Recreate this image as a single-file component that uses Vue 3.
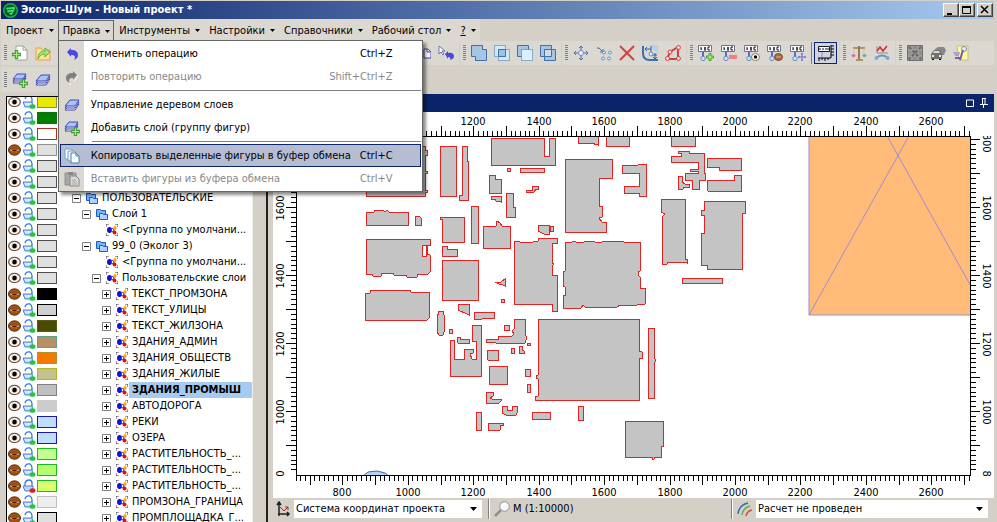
<script setup>
import { ref } from 'vue'

const menus = ['Проект', 'Правка', 'Инструменты', 'Настройки', 'Справочники', 'Рабочий стол', '?']
const openMenu = ref('Правка')

const editItems = [
  { icon: 'undo', text: 'Отменить операцию', keys: 'Ctrl+Z' },
  { icon: 'redo', text: 'Повторить операцию', keys: 'Shift+Ctrl+Z', off: true },
  { sep: true },
  { icon: 'layers', text: 'Управление деревом слоев' },
  { icon: 'layers-add', text: 'Добавить слой (группу фигур)' },
  { sep: true },
  { icon: 'copy', text: 'Копировать выделенные фигуры в буфер обмена', keys: 'Ctrl+C', hot: true },
  { icon: 'paste', text: 'Вставить фигуры из буфера обмена', keys: 'Ctrl+V', off: true }
]

const groups = [
  ['union', 'intersect', 'subtract', 'xor'],
  ['move', 'nodes', 'delete', 'align', 'polygon'],
  ['tag-add', 'tag-remove', 'tag-eye', 'tag-hide', 'tag-move', '|', 'tag-ruler'],
  ['balance', 'chart'],
  ['grid', 'car', 'note']
]

const P = '#e0e0e0'
const rows = [
  { c: '#e8e800', b: '#8a8a50' },
  { c: '#008000', b: '#107010' },
  { c: '#ffffff', b: '#b03020' },
  { c: P, b: '#909090', shut: true },
  { c: P, b: '#505050' },
  { c: P, b: '#505050' },
  { c: P, b: '#505050', lvl: 0, exp: '-', icon: 'folder', name: 'ПОЛЬЗОВАТЕЛЬСКИЕ' },
  { c: P, b: '#505050', lvl: 1, exp: '-', icon: 'folder', name: 'Слой 1' },
  { c: P, b: '#505050', lvl: 2, icon: 'figures', name: '<Группа по умолчани...' },
  { c: P, b: '#505050', lvl: 1, exp: '-', icon: 'folder', name: '99_0 (Эколог 3)' },
  { c: P, b: '#505050', lvl: 2, icon: 'figures', name: '<Группа по умолчани...' },
  { c: P, b: '#505050', lvl: 2, exp: '-', icon: 'figures', name: 'Пользовательские слои' },
  { c: '#000000', b: '#000000', lvl: 3, shut: true, name: 'ТЕКСТ_ПРОМЗОНА' },
  { c: '#d0d0d0', b: '#000000', lvl: 3, shut: true, name: 'ТЕКСТ_УЛИЦЫ' },
  { c: '#4a4a00', b: '#5a5a10', lvl: 3, shut: true, name: 'ТЕКСТ_ЖИЛЗОНА' },
  { c: '#b89068', b: '#60a088', lvl: 3, name: 'ЗДАНИЯ_АДМИН' },
  { c: '#f47a00', b: '#b09030', lvl: 3, name: 'ЗДАНИЯ_ОБЩЕСТВ' },
  { c: '#c2c28a', b: '#b4b430', lvl: 3, name: 'ЗДАНИЯ_ЖИЛЫЕ' },
  { c: '#c0c0c0', b: '#808080', lvl: 3, name: 'ЗДАНИЯ_ПРОМЫШ', selected: true },
  { c: '#cccccc', b: '#cccccc', lvl: 3, name: 'АВТОДОРОГА' },
  { c: '#c0dcff', b: '#1818b8', lvl: 3, name: 'РЕКИ' },
  { c: '#c0dcff', b: '#1818b8', lvl: 3, name: 'ОЗЕРА' },
  { c: '#c0ff90', b: '#20b820', lvl: 3, shut: true, name: 'РАСТИТЕЛЬНОСТЬ_...' },
  { c: '#b0ff70', b: '#20b820', lvl: 3, shut: true, name: 'РАСТИТЕЛЬНОСТЬ_...' },
  { c: '#d8ff70', b: '#20b820', lvl: 3, shut: true, locked: true, name: 'РАСТИТЕЛЬНОСТЬ_...' },
  { c: '#eeeeee', b: '#c0c0c0', lvl: 3, shut: true, name: 'ПРОМЗОНА_ГРАНИЦА' },
  { c: P, b: '#000000', lvl: 3, shut: true, name: 'ПРОМПЛОЩАДКА_Г...' }
]

const shapes = [
  '366,146 425,146 425,150 427,150 427,155 425,155 425,171 427,171 427,173 425,173 425,190 427,190 427,192 425,192 425,196 366,196',
  '440,146 456,146 456,196 440,196',
  '462,146 467,146 467,161 468,161 468,200 459,200 459,195 462,195',
  '491,138 544,138 544,156 549,156 549,138 555,138 555,165 491,165',
  '507,168 510,168 510,171 507,171',
  '520,168 544,168 544,172 520,172',
  '489,175 495,175 495,179 501,179 501,193 489,193',
  '491,196 501,196 501,202 496,201 495,199 491,199',
  '506,193 513,193 513,207 515,207 515,217 506,217',
  '526,190 532,190 532,186 538,186 538,189 536,189 534,192 526,192',
  '565,159 612,159 612,178 599,178 599,206 602,206 602,217 599,218 602,222 606,222 606,232 565,232',
  '471,206 478,206 478,243 471,243',
  '440,217 464,217 464,242 442,242 442,219 440,219',
  '483,226 496,226 497,221 500,223 502,226 510,226 510,248 483,248',
  '538,225 549,225 549,234 544,234 538,231',
  '550,226 553,226 553,231 550,231',
  '442,246 447,246 447,249 457,249 457,256 442,256',
  '442,260 478,260 478,300 442,300',
  '514,242 517,241 520,242 533,242 538,241 539,238 557,238 557,243 552,243 552,263 554,264 552,266 552,275 557,275 557,311 552,311 552,304 514,304',
  '565,242 572,242 574,241 576,242 584,242 586,241 593,241 595,242 602,242 603,241 611,241 612,242 613,241 623,241 624,242 640,242 640,271 638,272 638,275 640,277 640,288 645,288 645,304 637,305 620,305 617,307 585,307 583,305 581,308 563,308 563,295 565,295 565,287 563,286 563,272 565,271',
  '578,134 598,134 598,145 591,143 578,143',
  '606,134 629,134 629,146 606,146',
  '671,134 695,134 695,146 671,146',
  '622,165 638,165 639,164 646,164 646,196 639,196 639,193 624,193 624,186 639,186 639,173 622,173',
  '678,151 689,151 689,153 704,153 704,173 705,173 705,180 699,180 699,189 692,189 692,180 685,180 685,173 698,173 698,171 690,171 690,169 698,169 698,162 671,162 671,156 681,156 681,153 678,153',
  '678,176 682,176 682,182 685,184 689,184 689,187 684,187 683,189 678,189',
  '707,158 741,158 741,170 719,170 719,167 707,167',
  '707,180 734,180 734,175 741,175 741,191 708,191 707,189',
  '661,199 685,199 685,259 687,259 687,263 682,262 668,262 667,264 662,264 662,217 665,214 661,212',
  '704,201 745,201 745,213 742,213 742,269 707,269 707,265 701,265 701,233 704,233 704,215 701,215 701,210 704,210',
  '682,278 722,278 722,283 682,283',
  '366,212 374,212 375,210 383,210 385,212 387,210 389,212 408,212 408,225 366,225',
  '415,216 419,216 421,218 421,225 415,225',
  '366,239 430,239 430,245 422,245 422,256 426,256 426,246 427,246 427,254 430,255 430,272 428,274 418,274 417,277 407,277 406,275 394,275 393,273 382,273 381,276 373,276 372,274 366,274',
  '365,293 370,293 371,290 410,290 411,292 430,292 429,318 427,320 365,320',
  '458,304 469,304 469,315 465,313 460,311 458,310',
  '474,312 494,312 494,318 483,318 481,320 474,319',
  '439,311 443,311 444,315 444,332 443,335 439,335 437,332 437,318',
  '449,329 452,329 452,333 449,333',
  '450,340 454,340 454,359 464,359 464,349 473,349 473,353 470,354 472,359 476,359 476,341 472,341 472,325 481,325 481,376 450,376',
  '457,337 460,337 460,339 469,339 469,343 458,343 457,342',
  '504,325 509,325 509,330 504,330',
  '486,339 498,339 498,336 512,336 514,334 512,331 514,329 514,319 525,319 525,335 526,336 526,340 525,343 496,343 495,342 486,342',
  '527,343 530,343 530,345 527,345',
  '511,348 514,348 514,353 511,353',
  '519,346 522,346 522,350 524,351 524,353 519,353',
  '487,353 488,350 498,350 498,360 488,360',
  '489,366 507,366 507,384 489,384',
  '525,369 530,369 530,376 525,376',
  '527,384 530,384 530,392 527,392',
  '486,392 493,392 493,396 490,398 492,399 501,399 501,401 499,403 486,403',
  '502,406 507,406 507,410 512,410 512,406 517,406 517,413 516,415 506,415 502,413',
  '476,412 481,412 481,430 476,430',
  '488,423 503,423 503,425 501,425 500,430 488,430',
  '532,412 550,412 550,419 532,419',
  '578,406 583,406 583,420 578,420',
  '538,319 639,319 639,351 642,352 642,358 639,358 639,400 535,400 535,397 538,396 538,379 536,378 536,376 538,375',
  '648,328 654,328 654,358 655,359 655,362 654,363 654,398 648,398',
  '625,421 663,421 663,446 661,446 661,457 655,457 654,459 652,459 652,457 625,457',
  '495,282 501,282 505,279 505,286 501,284 499,284',
  '501,299 504,299 504,302 501,302'
]

// Ruler ticks: seven steps to every hundred metres.
const hTicks = []
for (let i = -94; i <= 50; i++) {
  hTicks.push({ p: Math.round(439 + (i * 32.72) / 7), big: i % 7 === 0 })
}
const hLabels = [800, 1000, 1200, 1400, 1600, 1800, 2000, 2200, 2400, 2600].map((v) => ({
  v,
  p: Math.round(439 + (v - 2000) * 0.3272)
}))
const vTicks = []
for (let i = -54; i <= 14; i++) {
  vTicks.push({ p: Math.round(71 - (i * 34) / 7), big: i % 7 === 0 })
}
const vLabels = [1800, 1600, 1400, 1200, 1000, 800].map((v) => ({
  v,
  p: Math.round(72 - (v - 1600) * 0.34)
}))
</script>

<template>
  <svg class="defs" aria-hidden="true">
    <symbol id="undo" viewBox="0 0 16 16"><path d="M3 6l4-4v2c5 0 7 2 7 5 0 2-1 4-4 5 2-3 1-5-3-5v2z" fill="#4a4ae0" /></symbol>
    <symbol id="redo" viewBox="0 0 16 16"><path d="M13 6l-4-4v2C4 4 2 6 2 9c0 2 1 4 4 5-2-3-1-5 3-5v2z" fill="#808080" /><path d="M14 7l-4 5M7 15H5" stroke="#fff" /></symbol>
    <symbol id="layers" viewBox="0 0 16 16">
      <path d="M1 13l5-6h9l-4 6z" fill="#fff" stroke="#4548a8" /><path d="M1 11l5-6h9l-4 6z" fill="#dfe8ff" stroke="#4548a8" /><path d="M1 9l5-6h9l-4 6z" fill="#a8c4f4" stroke="#4548b8" />
    </symbol>
    <symbol id="plus" viewBox="0 0 8 8"><path d="M3 .5h2V3h2.500v2H5v2.500H3V5H.5V3H3z" fill="#a8f080" stroke="#48a030" /></symbol>
    <symbol id="layers-add" viewBox="0 0 16 16">
      <path d="M1 11l4-5h9l-3 5z" fill="#fff" stroke="#4548a8" /><path d="M1 9l4-5h9l-3 5z" fill="#dfe8ff" stroke="#4548a8" /><path d="M1 7l4-5h9l-3 5z" fill="#a8c4f4" stroke="#4548b8" />
      <use href="#plus" x="7" y="7" width="9" height="9" />
    </symbol>
    <symbol id="copy" viewBox="0 0 16 16">
      <path d="M1 1h6l2 2v8H1z" fill="#fff" stroke="#6aa0d0" /><path d="M4 3h6l2 2v8H4z" fill="#e8f4ff" stroke="#6aa0d0" /><path d="M7 5h5l3 3v7H7z" fill="#fff" stroke="#4080b0" /><path d="M12 5v3h3" fill="none" stroke="#4080b0" />
    </symbol>
    <symbol id="paste" viewBox="0 0 16 16">
      <path d="M1 2h11v12H1z" fill="#a8a8a8" stroke="#909090" /><path d="M4 1h5v3H4z" fill="#888" /><path d="M6 5h6l3 3v7H6z" fill="#d8d8d8" stroke="#888" /><path d="M8 9h4M8 11h5M8 13h5" stroke="#aaa" />
    </symbol>
    <symbol id="new" viewBox="0 0 16 16">
      <path d="M4 1h7l4 4v10H4z" fill="#fff" stroke="#a0a0a0" /><path d="M11 1v4h4" fill="none" stroke="#a0a0a0" /><use href="#plus" x="0" y="5" width="9" height="9" />
    </symbol>
    <symbol id="open" viewBox="0 0 16 16">
      <path d="M1 3h5l1 2h8v10H1z" fill="#ffe098" stroke="#e8a050" /><path d="M3 14c0-6 3-8 7-8V3l5 4-5 5V9c-3 0-5 1-7 5z" fill="#a0e870" stroke="#60b040" />
    </symbol>
    <symbol id="cut-page" viewBox="0 0 16 16"><path d="M9 4h4l3 3v6H9z" fill="#fff" stroke="#4040b0" /><path d="M12 4v3h3" fill="none" stroke="#4040b0" /></symbol>
    <symbol id="cursor-undo" viewBox="0 0 16 16">
      <path d="M1 1v8l2-2 2 3 1-1-2-3h3z" fill="#fff" stroke="#5858a0" stroke-width=".8" /><path d="M7 9l3-3v2c4-1 6 1 6 3s-1 3-4 4c1-2 0-3-2-3v2z" fill="#4a4ad8" />
    </symbol>
    <symbol id="union" viewBox="0 0 16 16"><path d="M.5.5h11v4h4v11h-11v-4h-4z" fill="#a8c4e4" stroke="#4070a8" /></symbol>
    <symbol id="intersect" viewBox="0 0 16 16">
      <path d="M.5.5h11v11H.5zM4.500 4.500h11v11h-11z" fill="#d0e8fc" stroke="#4070a8" stroke-dasharray="1 1" /><path d="M4.500 4.500h7v7h-7z" fill="#a0c0e4" stroke="#4070a8" />
    </symbol>
    <symbol id="subtract" viewBox="0 0 16 16"><path d="M.5.5h11v11H.5z" fill="#a8c4e4" stroke="#4070a8" /><path d="M4.500 4.500h11v11h-11z" fill="#d8f0ff" stroke="#4070a8" stroke-dasharray="1 1" /></symbol>
    <symbol id="xor" viewBox="0 0 16 16"><path d="M.5.5h11v11H.5zM4.500 4.500h11v11h-11z" fill="#a8c4e4" stroke="#4070a8" /><path d="M4.500 4.500h7v7h-7z" fill="#d4dce4" stroke="#4070a8" /></symbol>
    <symbol id="move" viewBox="0 0 16 16">
      <path d="M8 1v14M1 8h14M6 3l2-2 2 2M6 13l2 2 2-2M3 6L1 8l2 2M13 6l2 2-2 2" fill="none" stroke="#4870a0" /><circle cx="8" cy="8" r="2.500" fill="#e8f4ff" stroke="#7090b8" />
    </symbol>
    <symbol id="nodes" viewBox="0 0 16 16">
      <path d="M1 3h2l4 4M4 7h3V4" fill="none" stroke="#4070a0" /><g fill="#d8ecff" stroke="#6890c0"><circle cx="8" cy="7.500" r="1.500" /><circle cx="14" cy="7.500" r="1.500" /><circle cx="7" cy="13.500" r="1.500" /><circle cx="13" cy="13.500" r="1.500" /></g>
    </symbol>
    <symbol id="delete" viewBox="0 0 16 16"><path d="M1 1l14 14M15 1L1 15" stroke="#d84040" stroke-width="2" /></symbol>
    <symbol id="align" viewBox="0 0 16 16">
      <path d="M7 0h9v9z" fill="#b4d0f0" /><path d="M1 1v7q0 7 7 7h8" fill="none" stroke="#3870a8" stroke-width="2" /><path d="M3 4h6M5 2L3 4l2 2M9 1v6M10 10h5M13 8v5M11 12l2 2 2-2" fill="none" stroke="#3060a0" /><circle cx="9" cy="9" r="2" fill="#d8ecff" stroke="#6890c0" />
    </symbol>
    <symbol id="polygon" viewBox="0 0 16 16">
      <path d="M2 14l3-7 8-5v12z" fill="none" stroke="#c84040" stroke-width="2" /><g fill="#ffd0d0" stroke="#d04848"><circle cx="2.500" cy="13.500" r="2" /><circle cx="5" cy="7" r="2" /><circle cx="13.500" cy="2.500" r="2" /><circle cx="13.500" cy="13.500" r="2" /></g>
    </symbol>
    <symbol id="tag" viewBox="0 0 16 16">
      <path d="M.5.5h13v6H.5z" fill="#fff" stroke="#707098" /><path d="M3 2v3M3 4h1M6 3h2M6 5h2M7 2v3M10 2v3M10 2h2M10 5h2" stroke="#101020" /><path d="M5 7v5" stroke="#6868c0" stroke-width="2" /><circle cx="5" cy="13.500" r="2.200" fill="#c8e0f8" stroke="#6890c0" />
    </symbol>
    <symbol id="tag-add" viewBox="0 0 16 16"><use href="#tag" /><use href="#plus" x="8" y="8" width="8" height="8" /></symbol>
    <symbol id="tag-remove" viewBox="0 0 16 16"><use href="#tag" /><path d="M8 10h8v4H8z" fill="#f08080" /></symbol>
    <symbol id="tag-eye" viewBox="0 0 16 16"><use href="#tag" /><ellipse cx="11.500" cy="12" rx="4" ry="3.500" fill="#fff" stroke="#907860" /><circle cx="11.500" cy="12" r="1.700" /></symbol>
    <symbol id="tag-hide" viewBox="0 0 16 16"><use href="#tag" /><ellipse cx="11.500" cy="12" rx="4" ry="3.500" fill="#a86840" stroke="#805030" /><path d="M9 12h5" stroke="#e0b090" /></symbol>
    <symbol id="tag-move" viewBox="0 0 16 16"><use href="#tag" /><path d="M12 8v8M8 12h8M11 9h2M11 15h2M9 11v2M15 11v2" stroke="#6868e0" /></symbol>
    <symbol id="tag-ruler" viewBox="0 0 16 16">
      <path d="M.5 1.500h11v5H.5z" fill="#fff" stroke="#181830" /><path d="M2 3v2M5 3v2M8 3v2M10 3v2" stroke="#101020" /><path d="M13 0v13H0M13 1h3M13 4h3M13 7h3M13 10h3M1 13v3M4 13v2M7 13v3M10 13v2" stroke="#000" fill="none" />
      <path d="M4 7v5" stroke="#a0b8d8" stroke-width="2" />
    </symbol>
    <symbol id="balance" viewBox="0 0 16 16">
      <path d="M8 1v13" stroke="#a07848" stroke-width="2" /><path d="M5 15h7M2 3h12" stroke="#a07848" stroke-width="1.500" /><path d="M3 3v6M13 3v6" stroke="#c0b090" stroke-dasharray="1 1" /><ellipse cx="2.500" cy="10.500" rx="2" ry="1.500" fill="#d070b0" /><ellipse cx="13.500" cy="10.500" rx="2" ry="1.500" fill="#70b090" />
    </symbol>
    <symbol id="chart" viewBox="0 0 16 16">
      <path d="M3 1v7h11" fill="none" stroke="#909090" /><path d="M3 6l3-4 3 4 4-5" fill="none" stroke="#d02828" stroke-width="1.500" /><path d="M2 13q6-5 12 0" fill="none" stroke="#6890c0" stroke-width="2" /><circle cx="2.500" cy="13" r="2" fill="#80a8d8" /><circle cx="13.500" cy="13" r="2" fill="#80a8d8" />
    </symbol>
    <symbol id="grid" viewBox="0 0 16 16">
      <path d="M.5.5h15v15H.5z" fill="#909090" stroke="#707070" /><path d="M1 5h14M1 11h14M5 1v14M11 1v14" stroke="#a8a8a8" /><path d="M2 2l12 12M14 2L2 14" stroke="#686868" stroke-width="2" stroke-dasharray="3 2" />
    </symbol>
    <symbol id="car" viewBox="0 0 16 16">
      <path d="M5 4l3-2h6l2 3-2 5H5z" fill="#888" /><path d="M1 9l3-4h6l2 4v5H1z" fill="#707070" /><path d="M4 6h5l1 2H3z" fill="#d8d8d8" /><path d="M2 11h2M9 11h2" stroke="#e8e8e8" stroke-width="2" /><path d="M2 14h2v1H2zM9 14h2v1H9z" />
    </symbol>
    <symbol id="note" viewBox="0 0 16 16">
      <path d="M4 1h11v14H6z" fill="#fff8a0" stroke="#c8c070" /><circle cx="11" cy="4" r="2.500" fill="#e0f0ff" stroke="#8090b0" /><path d="M0 7h7l-1 4H2z" fill="#b0a0d0" /><path d="M10 5L7 15M2 13h5" stroke="#7060b0" stroke-width="2" />
    </symbol>
    <symbol id="eye" viewBox="0 0 13 12"><ellipse cx="6.500" cy="6" rx="5.800" ry="4.600" fill="#fff" stroke="#7a5238" stroke-width="1.300" /><circle cx="6.500" cy="6" r="3" fill="#c8c0b8" /><circle cx="6.500" cy="6" r="2.200" /></symbol>
    <symbol id="eye-shut" viewBox="0 0 13 12"><ellipse cx="6.500" cy="6" rx="6" ry="5.200" fill="#a05010" stroke="#603010" /><path d="M2 6q4 2.500 9 0" fill="none" stroke="#e8b080" /><path d="M4 6q2.500 3 5 0" fill="#402000" /></symbol>
    <symbol id="unlock" viewBox="0 0 14 14">
      <path d="M3 4q1-4 5-3 2 1 2 4v2" fill="none" stroke="#3878e0" stroke-width="1.300" /><path d="M1 7h9l1 5H3z" fill="#c0d8ff" stroke="#4080e0" /><path d="M3 9h6" stroke="#fff" /><ellipse cx="10.500" cy="11.500" rx="3" ry="2.300" fill="#20c840" />
    </symbol>
    <symbol id="lock" viewBox="0 0 14 14">
      <path d="M3 7V4q1-3 4-3t3 3v3" fill="none" stroke="#3878e0" stroke-width="1.300" /><path d="M1 7h10v5H3z" fill="#c0d8ff" stroke="#4080e0" /><ellipse cx="10.500" cy="11.500" rx="3" ry="2.300" fill="#e02020" />
    </symbol>
    <symbol id="folder" viewBox="0 0 12 12"><path d="M.5 1.500h4l1 1h4v6h-9z" fill="#78b0f8" stroke="#1858c8" /><path d="M3.500 5.500h3l1 1h4v5h-8z" fill="#b0d4ff" stroke="#1858c8" /></symbol>
    <symbol id="figures" viewBox="0 0 12 12">
      <path d="M0 3V0h3M9 0h3v3M12 9v3H9M3 12H0V9" fill="none" stroke="#404040" /><ellipse cx="3.500" cy="6" rx="2.500" ry="3" fill="#1010e0" /><circle cx="6.500" cy="6" r="1.500" fill="#fff" stroke="#1010e0" /><path d="M9 1l2 3H7z" fill="#f0c000" /><circle cx="9" cy="4.500" r="1.500" fill="#f0b000" /><circle cx="8.500" cy="8.500" r="2" fill="#e01010" />
    </symbol>
    <symbol id="axes" viewBox="0 0 16 16"><path d="M4 15V2M2 4l2-3 2 3M3 13h11M12 11l2 2-2 2" fill="none" stroke="#202020" stroke-width="1.500" /><path d="M5 6l4 4 4-4M10 6h3v3" fill="none" stroke="#a02828" /></symbol>
    <symbol id="lens" viewBox="0 0 16 16"><circle cx="10.500" cy="5.500" r="4.800" fill="#f4f8fc" stroke="#909090" /><path d="M7 9l-6 6" stroke="#909090" stroke-width="2.500" /><path d="M8 5q1-2 3-2" stroke="#fff" fill="none" /></symbol>
    <symbol id="arcs" viewBox="0 0 16 16"><g fill="none" stroke-width="1.500"><path d="M1 13Q2 4 11 2" stroke="#3868c0" /><path d="M5 14q1-7 8-9" stroke="#58b048" /><path d="M9 15q1-5 6-6" stroke="#e04848" /></g></symbol>
    <symbol id="caret" viewBox="0 0 7 4"><path d="M0 0h7L3.500 4z" /></symbol>
  </svg>

  <div class="window">
    <header class="title">
      <svg class="logo" viewBox="0 0 16 16" aria-hidden="true"><circle cx="8" cy="8" r="8" fill="#22b04c" /><circle cx="8" cy="8" r="6.500" fill="#0c5a20" /><path d="M3 5l10-1-1 2-8 1zM4 8l7-1-1 2-5 1zM6 11l3-1 3-5 1 1-4 7z" fill="#38e070" /></svg>
      <h1>Эколог-Шум - Новый проект *</h1>
      <button class="sys" aria-label="Свернуть"><svg viewBox="0 0 12 11"><path d="M2 8h5v2H2z" /></svg></button>
      <button class="sys" aria-label="Развернуть"><svg viewBox="0 0 12 11"><path d="M1.500 1.500h8v7h-8z" fill="none" stroke="#000" /><path d="M1 1h9v2H1z" /></svg></button>
      <button class="sys close" aria-label="Закрыть"><svg viewBox="0 0 12 11"><path d="M2 1l7 7M9 1L2 8" stroke="#000" stroke-width="1.500" /></svg></button>
    </header>

    <nav class="menubar">
      <div v-for="m in menus" :key="m" class="menu" :class="{ open: openMenu === m }">
        <button class="menu-btn" @click="openMenu = openMenu === m ? '' : m">
          <span :class="{ hint: m === '?' }">{{ m }}</span>
          <svg class="drop"><use href="#caret" /></svg>
        </button>
        <div v-if="m === 'Правка' && openMenu === m" class="popup">
          <template v-for="(it, i) in editItems" :key="i">
            <hr v-if="it.sep" />
            <button v-else class="item" :class="{ hot: it.hot }" :disabled="it.off">
              <svg class="ico"><use :href="'#' + it.icon" /></svg>
              <span class="label">{{ it.text }}</span>
              <span>{{ it.keys }}</span>
            </button>
          </template>
        </div>
      </div>
    </nav>

    <div class="toolbar">
      <div class="group files">
        <i class="grip"></i>
        <button class="tool" aria-label="Создать"><svg><use href="#new" /></svg></button>
        <button class="tool" aria-label="Открыть"><svg><use href="#open" /></svg></button>
        <i class="fill"></i>
        <button class="tool" aria-label="Страница"><svg><use href="#cut-page" /></svg></button>
        <button class="tool" aria-label="Отменить выделение"><svg><use href="#cursor-undo" /></svg></button>
      </div>
      <div v-for="(g, i) in groups" :key="i" class="group">
        <i class="grip"></i>
        <template v-for="t in g" :key="t">
          <i v-if="t === '|'" class="bar"></i>
          <button v-else class="tool" :class="{ pressed: t === 'tag-ruler' }" :aria-label="t"><svg><use :href="'#' + t" /></svg></button>
        </template>
      </div>
    </div>
    <div class="toolbar second">
      <div class="group">
        <i class="grip"></i>
        <button class="tool" aria-label="Добавить слой"><svg><use href="#layers-add" /></svg></button>
        <button class="tool" aria-label="Слои"><svg><use href="#layers" /></svg></button>
      </div>
    </div>

    <main class="work">
      <aside class="tree">
        <ul>
          <li v-for="(r, i) in rows" :key="i">
            <button class="mini" aria-label="Видимость"><svg class="eye"><use :href="r.shut ? '#eye-shut' : '#eye'" /></svg></button>
            <button class="mini" aria-label="Блокировка"><svg class="pad"><use :href="r.locked ? '#lock' : '#unlock'" /></svg></button>
            <span class="swatch" :style="{ background: r.c, borderColor: r.b }"></span>
            <template v-if="r.name">
              <i class="indent" :style="{ width: r.lvl * 10 + 'px' }"></i>
              <button v-if="r.exp || r.lvl === 3" class="exp" aria-label="Развернуть узел">
                <svg viewBox="0 0 9 9"><path d="M.5.5h8v8h-8z" fill="#fff" stroke="#808080" /><path :d="r.exp ? 'M2 4.500h5' : 'M2 4.500h5M4.500 2v5'" stroke="#000" /></svg>
              </button>
              <i v-else class="exp"></i>
              <svg class="node"><use :href="'#' + (r.icon || 'figures')" /></svg>
              <span class="name" :class="{ selected: r.selected }">{{ r.name }}</span>
            </template>
          </li>
        </ul>
      </aside>

      <section class="map">
        <div class="map-head">
          <svg viewBox="0 0 8 10"><path d="M.5 2h7v6.500h-7z" fill="none" stroke="#fff" /></svg>
          <svg viewBox="0 0 8 10"><path d="M2.500 0v6M2 .5h4M5 0v6M0 6.500h8M3.500 6v4" fill="none" stroke="#fff" /></svg>
        </div>
        <div class="sheet">
          <i></i>
          <svg class="ruler">
            <path v-for="(t, i) in hTicks" :key="i" :d="`M${t.p} ${t.big ? 14 : 19}V24`" />
            <text v-for="l in hLabels" :key="l.v" :x="l.p" y="13">{{ l.v }}</text>
          </svg>
          <i></i>

          <svg class="ruler">
            <path v-for="(t, i) in vTicks" :key="i" :d="`M${t.big ? 13 : 18} ${t.p}H23`" />
            <text v-for="l in vLabels" :key="l.v" :transform="`translate(11 ${l.p}) rotate(-90)`">{{ l.v }}</text>
          </svg>
          <svg class="canvas" role="img" aria-label="План территории">
            <g transform="translate(-297 -137)">
              <path d="M809 134H975V315H809Z" fill="#ffbb77" stroke="#a08cd8" />
              <path d="M809 315L910 134M886 134L973 290" class="diag" />
              <polygon v-for="(s, i) in shapes" :key="i" :points="s" class="shape" />
              <path d="M363 476l5-4 9-1 8 2 4 3z" fill="#b8d4f4" stroke="#4868a0" />
            </g>
          </svg>
          <svg class="ruler">
            <path v-for="(t, i) in vTicks" :key="i" :d="`M0 ${t.p}H${t.big ? 9 : 5}`" />
            <text v-for="l in vLabels" :key="l.v" :transform="`translate(12 ${l.p}) rotate(90)`">{{ l.v }}</text>
          </svg>

          <i></i>
          <svg class="ruler">
            <path v-for="(t, i) in hTicks" :key="i" :d="`M${t.p} 0V${t.big ? 9 : 5}`" />
            <text v-for="l in hLabels" :key="l.v" :x="l.p" y="20">{{ l.v }}</text>
          </svg>
          <i></i>
        </div>
        <footer class="status">
          <svg class="ico"><use href="#axes" /></svg>
          <label class="combo coords">
            <select aria-label="Система координат"><option>Система координат проекта</option></select>
            <svg class="caret"><use href="#caret" /></svg>
          </label>
          <i class="split"></i>
          <svg class="ico"><use href="#lens" /></svg>
          <span class="scale">М (1:10000)</span>
          <i class="split"></i>
          <svg class="ico"><use href="#arcs" /></svg>
          <label class="combo result">
            <select aria-label="Расчет"><option>Расчет не проведен</option></select>
            <svg class="caret"><use href="#caret" /></svg>
          </label>
        </footer>
      </section>
    </main>
  </div>
</template>

<style>
body { background: #d4d0c8; overflow: hidden; }
</style>

<style scoped>
.defs { position: absolute; width: 0; height: 0; }
.window { display: flex; flex-direction: column; height: 100vh; padding: 1px 3px 0 1px; box-sizing: border-box; overflow: hidden; background: #d4d0c8; color: #000; font: 11px/16px "DejaVu Sans Condensed", "DejaVu Sans", sans-serif; }
button { margin: 0; padding: 0; border: 0; background: none; font: inherit; color: inherit; text-align: left; }
svg { display: block; flex: none; }
i { display: block; flex: none; }
.ico { width: 16px; height: 16px; }
.caret { width: 7px; height: 4px; }
.drop { width: 5px; height: 3px; }

.title { display: flex; align-items: center; flex: none; height: 18px; padding: 0 1px 0 2px; background: linear-gradient(90deg, #0a246a, #a6caf0); color: #fff; }
.title h1 { flex: 1; margin: 0 0 0 3px; font-size: 11px; line-height: 16px; font-weight: bold; white-space: nowrap; }
.logo { width: 15px; height: 15px; }
.sys { width: 16px; height: 14px; box-sizing: border-box; background: #d4d0c8; border: 1px solid; border-color: #fff #404040 #404040 #fff; box-shadow: inset -1px -1px #808080; }
.sys.close { margin-left: 2px; }
.sys svg { width: 12px; height: 11px; margin: 0 auto; }

.menubar { display: flex; align-self: flex-start; flex: none; height: 22px; padding-top: 1px; box-sizing: border-box; background: #dbd8d1; }
.menu { position: relative; }
.menu-btn { display: flex; align-items: center; gap: 5px; height: 21px; padding: 0 4px 0 5px; box-sizing: border-box; white-space: nowrap; }
.menu .hint { text-decoration: underline; }
.open .menu-btn { border: 1px solid #666; border-bottom: 0; padding: 0 3px 0 4px; }
.popup { position: absolute; z-index: 5; left: 0; top: 20px; width: 365px; padding: 1px; box-sizing: border-box; border: 1px solid #666; background: linear-gradient(90deg, #dbd8d1 25px, #fff 25px); box-shadow: 3px 3px 3px rgba(0, 0, 0, .45); }
.item { display: flex; align-items: center; width: 100%; height: 23px; padding: 0 27px 0 3px; border: 1px solid transparent; box-sizing: border-box; white-space: nowrap; }
.item .label { flex: 1; margin-left: 11px; }
.item:disabled { color: #888; }
.item.hot { background: #b6bdd2; border-color: #0a246a; }
.popup hr { height: 1px; margin: 2px 0 2px 32px; border: 0; background: #808080; }

.toolbar { display: flex; gap: 1px; flex: none; height: 24px; }
.toolbar.second { margin-top: 2px; height: 25px; }
.group { display: flex; align-items: center; padding: 0 2px 0 3px; background: #dbd8d1; }
.group:last-child { flex: 1; }
.files { width: 453px; }
.second .group { flex: none; width: 300px; }
.second .group:last-child { flex: none; }
.fill { flex: 1; }
.grip { width: 3px; height: 16px; margin-right: 1px; background: repeating-linear-gradient(#808080 0 1px, transparent 1px 2px); }
.tool { display: flex; align-items: center; justify-content: center; flex: none; width: 23px; height: 22px; box-sizing: border-box; }
.tool svg { width: 16px; height: 16px; }
.tool.pressed { border: 1px solid #0a246a; background: #d0d4e0; }
.bar { width: 1px; height: 22px; margin: 0 2px; background: #808080; }

.work { display: flex; flex: 1; min-height: 0; margin-top: 2px; }
.tree { flex: none; width: 247px; margin: 2px 13px 0 5px; border-left: 1px solid #000; border-top: 1px solid #000; border-right: 1px solid #f0eee8; box-sizing: border-box; background: #fff; overflow: hidden; }
.tree ul { list-style: none; margin: -3px 0 0; padding: 0; }
.tree li { display: flex; align-items: center; height: 16px; white-space: nowrap; }
.mini { margin-left: 1px; }
.eye { width: 13px; height: 12px; }
.pad { width: 14px; height: 14px; }
.swatch { flex: none; width: 20px; height: 12px; margin: 0 15px 0 1px; border: 1px solid; box-sizing: border-box; }
.exp { flex: none; width: 9px; height: 9px; }
.exp svg { width: 9px; height: 9px; }
.node { width: 12px; height: 12px; margin: 0 1px 0 5px; }
.name { flex: 1; padding-left: 3px; overflow: hidden; }
.name.selected { background: #a6caf0; font-weight: bold; }

.map { display: flex; flex-direction: column; flex: 1; min-width: 0; padding-left: 5px; border-left: 2px solid #202020; }
.map-head { display: flex; justify-content: flex-end; align-items: center; gap: 6px; flex: none; height: 18px; padding-right: 6px; background: #0a246a; }
.map-head svg { width: 8px; height: 10px; }
.sheet { display: grid; grid-template: 24px minmax(0, 1fr) 22px / 23px minmax(0, 1fr) 23px; flex: 1; min-height: 0; background: #fff; }
.sheet svg { width: 100%; height: 100%; overflow: hidden; }
.ruler path { stroke: #000; shape-rendering: crispEdges; }
.ruler text { font-size: 11px; text-anchor: middle; }
.canvas { box-sizing: border-box; border: 1px solid #000; }
.shape { fill: #c4c4c4; stroke: #e02424; shape-rendering: crispEdges; }
.diag { fill: none; stroke: #a08cd8; }

.status { display: flex; align-items: center; flex: none; height: 24px; padding: 0 6px 2px 2px; box-sizing: border-box; }
.combo { display: flex; align-items: center; height: 18px; margin-left: 3px; padding-right: 5px; box-sizing: border-box; background: #fff; }
.combo select { flex: 1; min-width: 0; height: 18px; padding: 0 0 0 2px; border: 0; background: none; appearance: none; font: inherit; color: #000; }
.coords { width: 188px; }
.result { flex: 1; }
.split { width: 1px; height: 20px; margin: 0 5px 0 6px; background: #808080; box-shadow: 1px 0 #fff; }
.scale { width: 212px; margin-left: 3px; }
</style>
